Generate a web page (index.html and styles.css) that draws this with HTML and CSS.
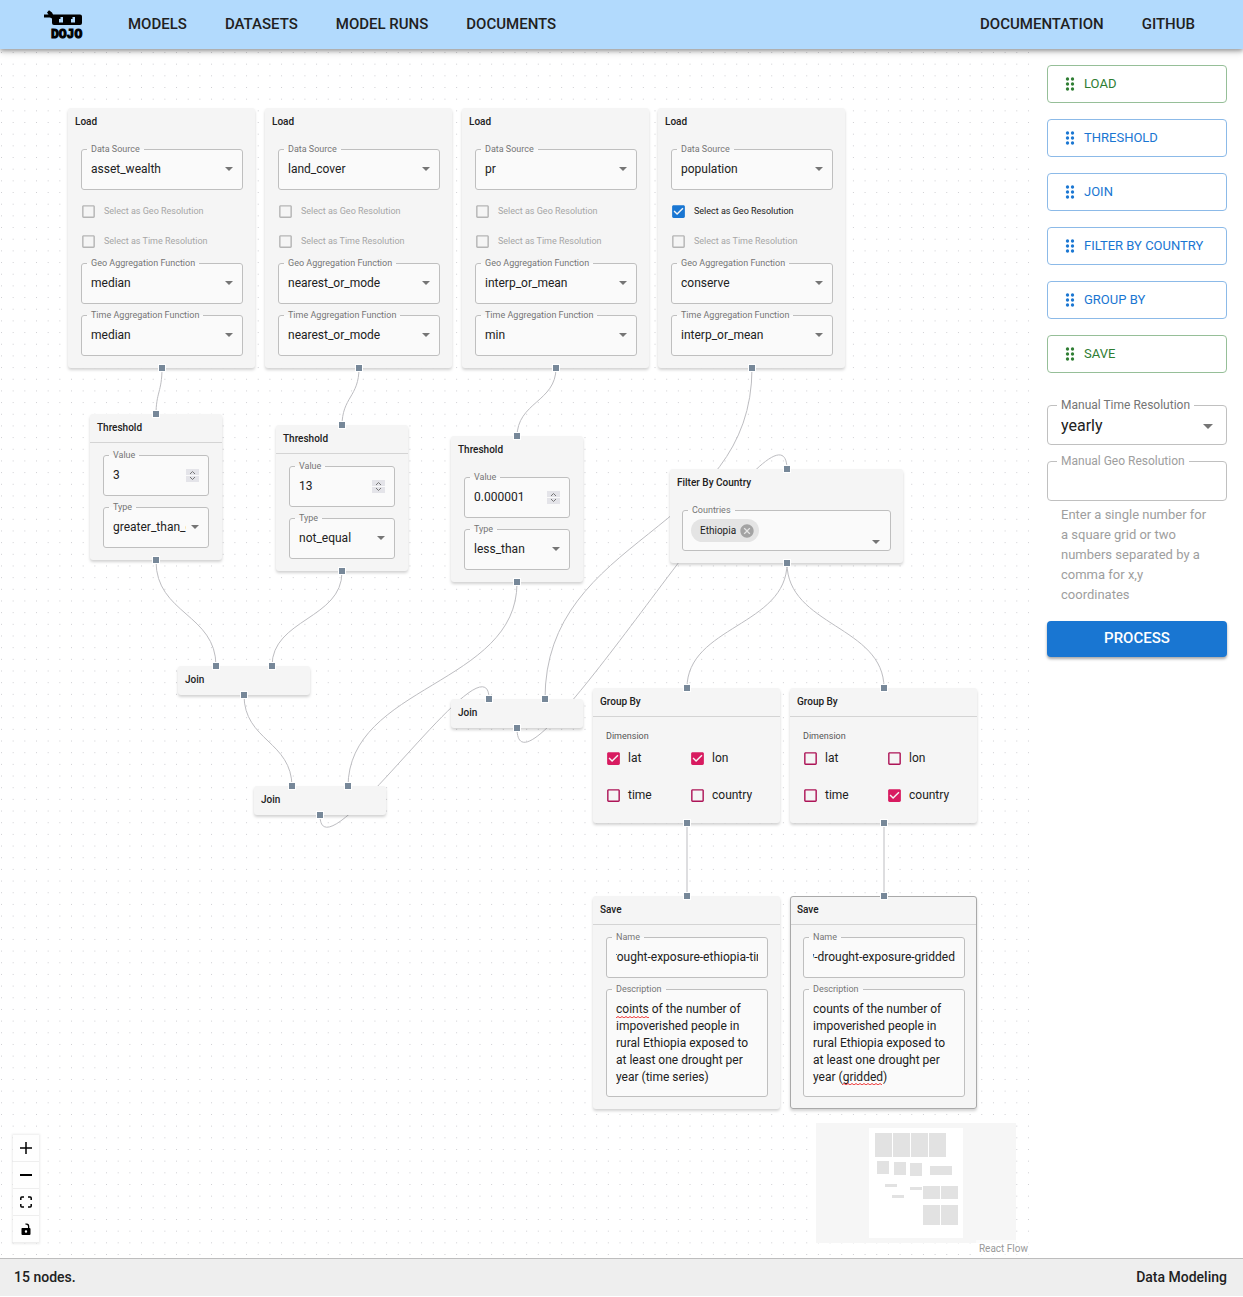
FILE: index.html
```html
<!DOCTYPE html>
<html lang="en">
<head>
<meta charset="utf-8">
<title>Dojo - Data Modeling</title>
<meta name="viewport" content="width=device-width, initial-scale=1">
<link rel="stylesheet" href="styles.css">
</head>
<body>
<header class="topbar">
  <a class="logo" href="#" aria-label="Dojo home">
    <svg width="40" height="32" viewBox="0 0 40 32">
      <path d="M0 5.500h4.500L3 3.500 5 1.200l3 2.300 1 2H36q2 0 2 2V14q0 2-2 2H10q-2 0-2-2v-4.500L6 8.500H0z"/>
      <path fill="#b2dafd" d="M15 8h4v5.500h-4zM27 8h4v5.500h-4z"/>
      <path d="M15 8h1.500v2H15zM27 8h1.500v2H27z"/>
      <text class="logo-text" x="7" y="29">DOJO</text>
    </svg>
  </a>
  <nav class="nav">
    <a href="#">MODELS</a>
    <a href="#">DATASETS</a>
    <a href="#">MODEL RUNS</a>
    <a href="#">DOCUMENTS</a>
  </nav>
  <nav class="nav nav-end">
    <a href="#">DOCUMENTATION</a>
    <a href="#">GITHUB</a>
  </nav>
</header>

<main class="workspace">
  <section class="canvas" aria-label="Data model graph">
    <svg class="layer" aria-hidden="true">
      <defs>
        <pattern id="dots" width="15" height="15" patternUnits="userSpaceOnUse" patternTransform="translate(1 3) scale(.778)">
          <circle cx=".6" cy=".6" r=".6" fill="#a0a0a8"/>
        </pattern>
      </defs>
      <rect width="100%" height="100%" fill="url(#dots)"/>
      <g class="edges">
        <path d="M162 319C162 343 156 343 156 366"/>
        <path d="M359 319C359 348 342 348 342 377"/>
        <path d="M556 319C556 353 517 353 517 388"/>
        <path d="M752 319C752 485 545 485 545 650"/>
        <path d="M156 512C156 565 216 565 216 617"/>
        <path d="M342 523C342 570 272 570 272 617"/>
        <path d="M517 534C517 636 348 636 348 738"/>
        <path d="M244 646C244 692 292 692 292 738"/>
        <path d="M320 766C320 836 489 580 489 650"/>
        <path d="M517 679C517 779 787 318 787 421"/>
        <path d="M787 514C787 577 687 577 687 639"/>
        <path d="M787 514C787 577 884 577 884 639"/>
        <path d="M687 773V847M884 773V847"/>
      </g>
    </svg>

    <article class="node wide load-1">
      <h2 class="node-title plain">Load</h2>
      <div class="node-body">
        <fieldset class="field"><legend><label for="src1">Data Source</label></legend><select id="src1"><option>asset_wealth</option></select></fieldset>
        <div class="checks">
          <label class="check off"><input type="checkbox" disabled>Select as Geo Resolution</label>
          <label class="check off"><input type="checkbox" disabled>Select as Time Resolution</label>
        </div>
        <fieldset class="field"><legend><label for="geo1">Geo Aggregation Function</label></legend><select id="geo1"><option>median</option></select></fieldset>
        <fieldset class="field"><legend><label for="time1">Time Aggregation Function</label></legend><select id="time1"><option>median</option></select></fieldset>
      </div>
      <i class="handle out"></i>
    </article>

    <article class="node wide load-2">
      <h2 class="node-title plain">Load</h2>
      <div class="node-body">
        <fieldset class="field"><legend><label for="src2">Data Source</label></legend><select id="src2"><option>land_cover</option></select></fieldset>
        <div class="checks">
          <label class="check off"><input type="checkbox" disabled>Select as Geo Resolution</label>
          <label class="check off"><input type="checkbox" disabled>Select as Time Resolution</label>
        </div>
        <fieldset class="field"><legend><label for="geo2">Geo Aggregation Function</label></legend><select id="geo2"><option>nearest_or_mode</option></select></fieldset>
        <fieldset class="field"><legend><label for="time2">Time Aggregation Function</label></legend><select id="time2"><option>nearest_or_mode</option></select></fieldset>
      </div>
      <i class="handle out"></i>
    </article>

    <article class="node wide load-3">
      <h2 class="node-title plain">Load</h2>
      <div class="node-body">
        <fieldset class="field"><legend><label for="src3">Data Source</label></legend><select id="src3"><option>pr</option></select></fieldset>
        <div class="checks">
          <label class="check off"><input type="checkbox" disabled>Select as Geo Resolution</label>
          <label class="check off"><input type="checkbox" disabled>Select as Time Resolution</label>
        </div>
        <fieldset class="field"><legend><label for="geo3">Geo Aggregation Function</label></legend><select id="geo3"><option>interp_or_mean</option></select></fieldset>
        <fieldset class="field"><legend><label for="time3">Time Aggregation Function</label></legend><select id="time3"><option>min</option></select></fieldset>
      </div>
      <i class="handle out"></i>
    </article>

    <article class="node wide load-4">
      <h2 class="node-title plain">Load</h2>
      <div class="node-body">
        <fieldset class="field"><legend><label for="src4">Data Source</label></legend><select id="src4"><option>population</option></select></fieldset>
        <div class="checks">
          <label class="check"><input type="checkbox" checked>Select as Geo Resolution</label>
          <label class="check off"><input type="checkbox" disabled>Select as Time Resolution</label>
        </div>
        <fieldset class="field"><legend><label for="geo4">Geo Aggregation Function</label></legend><select id="geo4"><option>conserve</option></select></fieldset>
        <fieldset class="field"><legend><label for="time4">Time Aggregation Function</label></legend><select id="time4"><option>interp_or_mean</option></select></fieldset>
      </div>
      <i class="handle out"></i>
    </article>

    <article class="node threshold-1">
      <i class="handle in"></i>
      <h2 class="node-title">Threshold</h2>
      <div class="node-body">
        <fieldset class="field"><legend><label for="val1">Value</label></legend><input id="val1" type="number" value="3"></fieldset>
        <fieldset class="field"><legend><label for="type1">Type</label></legend><select id="type1"><option>greater_than_equal</option></select></fieldset>
      </div>
      <i class="handle out"></i>
    </article>

    <article class="node threshold-2">
      <i class="handle in"></i>
      <h2 class="node-title">Threshold</h2>
      <div class="node-body">
        <fieldset class="field"><legend><label for="val2">Value</label></legend><input id="val2" type="number" value="13"></fieldset>
        <fieldset class="field"><legend><label for="type2">Type</label></legend><select id="type2"><option>not_equal</option></select></fieldset>
      </div>
      <i class="handle out"></i>
    </article>

    <article class="node threshold-3">
      <i class="handle in"></i>
      <h2 class="node-title plain">Threshold</h2>
      <div class="node-body">
        <fieldset class="field"><legend><label for="val3">Value</label></legend><input id="val3" type="number" step="any" value="0.000001"></fieldset>
        <fieldset class="field"><legend><label for="type3">Type</label></legend><select id="type3"><option>less_than</option></select></fieldset>
      </div>
      <i class="handle out"></i>
    </article>

    <article class="node filter">
      <i class="handle in"></i>
      <h2 class="node-title plain">Filter By Country</h2>
      <div class="node-body">
        <fieldset class="field combo">
          <legend><label for="countries">Countries</label></legend>
          <div class="combo-row">
            <span class="chip">Ethiopia
              <button type="button" aria-label="Remove Ethiopia">
                <svg width="16" height="16" viewBox="0 0 24 24"><path fill="#a3a3a3" d="M12 2C6.470 2 2 6.470 2 12s4.470 10 10 10 10-4.470 10-10S17.530 2 12 2zm5 13.590L15.590 17 12 13.410 8.410 17 7 15.590 10.590 12 7 8.410 8.410 7 12 10.590 15.590 7 17 8.410 13.410 12 17 15.590z"/></svg>
              </button>
            </span>
            <input id="countries" type="text">
            <svg class="combo-arrow" width="8" height="4" viewBox="0 0 8 4"><path fill="#757575" d="M0 0h8L4 4z"/></svg>
          </div>
        </fieldset>
      </div>
      <i class="handle out"></i>
    </article>

    <article class="node join-1">
      <i class="handle in left"></i><i class="handle in right"></i>
      <h2 class="node-title plain">Join</h2>
      <i class="handle out"></i>
    </article>
    <article class="node join-2">
      <i class="handle in left"></i><i class="handle in right"></i>
      <h2 class="node-title plain">Join</h2>
      <i class="handle out"></i>
    </article>
    <article class="node join-3">
      <i class="handle in left"></i><i class="handle in right"></i>
      <h2 class="node-title plain">Join</h2>
      <i class="handle out"></i>
    </article>

    <article class="node wide group-1">
      <i class="handle in"></i>
      <h2 class="node-title">Group By</h2>
      <div class="node-body grouping">
        <p class="group-label">Dimension</p>
        <div class="dimensions">
          <label class="check pink"><input type="checkbox" checked>lat</label>
          <label class="check pink"><input type="checkbox" checked>lon</label>
          <label class="check pink"><input type="checkbox">time</label>
          <label class="check pink"><input type="checkbox">country</label>
        </div>
      </div>
      <i class="handle out"></i>
    </article>

    <article class="node wide group-2">
      <i class="handle in"></i>
      <h2 class="node-title">Group By</h2>
      <div class="node-body grouping">
        <p class="group-label">Dimension</p>
        <div class="dimensions">
          <label class="check pink"><input type="checkbox">lat</label>
          <label class="check pink"><input type="checkbox">lon</label>
          <label class="check pink"><input type="checkbox">time</label>
          <label class="check pink"><input type="checkbox" checked>country</label>
        </div>
      </div>
      <i class="handle out"></i>
    </article>

    <article class="node wide save-1">
      <i class="handle in"></i>
      <h2 class="node-title">Save</h2>
      <div class="node-body">
        <fieldset class="field"><legend><label for="name1">Name</label></legend><input id="name1" type="text" value="drought-exposure-ethiopia-time-series" data-scroll="10"></fieldset>
        <fieldset class="field area"><legend><label for="desc1">Description</label></legend><textarea id="desc1" rows="5" spellcheck="false">coints of the number of impoverished people in rural Ethiopia exposed to at least one drought per year (time series)</textarea><span class="squiggle first"></span></fieldset>
      </div>
    </article>

    <article class="node wide selected save-2">
      <i class="handle in"></i>
      <h2 class="node-title">Save</h2>
      <div class="node-body">
        <fieldset class="field"><legend><label for="name2">Name</label></legend><input id="name2" type="text" value="country-drought-exposure-gridded" data-scroll="999"></fieldset>
        <fieldset class="field area"><legend><label for="desc2">Description</label></legend><textarea id="desc2" rows="5" spellcheck="false">counts of the number of impoverished people in rural Ethiopia exposed to at least one drought per year (gridded)</textarea><span class="squiggle last"></span></fieldset>
      </div>
    </article>

    <div class="controls">
      <button type="button" aria-label="Zoom in"><svg width="12" height="12" viewBox="0 0 24 24"><path d="M10.500 0h3v10.500H24v3H13.500V24h-3V13.500H0v-3h10.500z"/></svg></button>
      <button type="button" aria-label="Zoom out"><svg width="12" height="12" viewBox="0 0 12 12"><path d="M0 5h12v2H0z"/></svg></button>
      <button type="button" aria-label="Fit view"><svg width="12" height="12" viewBox="0 0 12 12"><path fill="none" stroke="#000" stroke-width="1.500" d="M.8 4V2Q.8 1 1.800 1H4M8 1h2.200q1 0 1 1v2M11.200 8v2q0 1-1 1H8M4 11H1.800q-1 0-1-1V8"/></svg></button>
      <button type="button" aria-label="Toggle interactivity"><svg width="12" height="12" viewBox="0 0 12 12"><path fill-rule="evenodd" d="M2 5h6V3.500Q8 1.500 5.500 1.500L5 .8Q9.300-.3 9.300 3.500V5h.2q1 0 1 1v5q0 1-1 1H2.500q-1 0-1-1V6q0-1 .5-1zm4 2.300a1.200 1.200 0 100 2.400 1.200 1.200 0 000-2.400z"/></svg></button>
    </div>

    <svg class="minimap" width="200" height="120" viewBox="0 0 200 120" aria-label="Mini map">
      <path fill="#f6f6f6" d="M0 0h200v120H0z"/>
      <path fill="#fff" d="M53 5h94v110H53z"/>
      <path fill="#e2e2e2" d="M59 10h17v24H59zM77 10h17v24H77zM95 10h17v24H95zM113 10h17v24h-17zM61 38h12v13H61zM78 39h12v13H78zM94 40h12v13H94zM114 43h22v9h-22zM69 61h12v3H69zM94 64h12v3H94zM76 72h12v3H76zM107 63h17v13h-17zM125 63h17v13h-17zM107 82h17v20h-17zM125 82h17v20h-17z"/>
    </svg>
    <a class="attribution" href="#">React Flow</a>
  </section>

  <aside class="sidebar">
    <button type="button" class="tool green"><svg width="20" height="20" viewBox="0 0 24 24"><use href="#grip"/></svg>LOAD</button>
    <button type="button" class="tool"><svg width="20" height="20" viewBox="0 0 24 24"><use href="#grip"/></svg>THRESHOLD</button>
    <button type="button" class="tool"><svg width="20" height="20" viewBox="0 0 24 24"><use href="#grip"/></svg>JOIN</button>
    <button type="button" class="tool"><svg width="20" height="20" viewBox="0 0 24 24"><use href="#grip"/></svg>FILTER BY COUNTRY</button>
    <button type="button" class="tool"><svg width="20" height="20" viewBox="0 0 24 24"><use href="#grip"/></svg>GROUP BY</button>
    <button type="button" class="tool green"><svg width="20" height="20" viewBox="0 0 24 24"><g id="grip" fill="currentColor"><circle cx="9" cy="6" r="2"/><circle cx="15" cy="6" r="2"/><circle cx="9" cy="12" r="2"/><circle cx="15" cy="12" r="2"/><circle cx="9" cy="18" r="2"/><circle cx="15" cy="18" r="2"/></g></svg>SAVE</button>

    <div class="settings">
      <fieldset class="field large"><legend><label for="mtime">Manual Time Resolution</label></legend><select id="mtime"><option>yearly</option></select></fieldset>
      <fieldset class="field large muted"><legend><label for="mgeo">Manual Geo Resolution</label></legend><input id="mgeo" type="text" aria-describedby="mgeo-help" disabled></fieldset>
      <p class="help" id="mgeo-help">Enter a single number for a square grid or two numbers separated by a comma for x,y coordinates</p>
    </div>
    <button type="button" class="process">PROCESS</button>
  </aside>
</main>

<footer class="statusbar"><span>15 nodes.</span><span>Data Modeling</span></footer>
<script src="script.js"></script>
</body>
</html>
```
FILE: styles.css
```css
* { box-sizing: border-box; }

body {
  margin: 0;
  min-height: 100vh;
  display: flex;
  flex-direction: column;
  background: #fff;
  color: #212121;
  font: 14px/20px Roboto, "Liberation Sans", sans-serif;
}

button, input, select, textarea { font: inherit; color: inherit; }
h2, p { margin: 0; }

/* Header */
.topbar {
  position: relative;
  z-index: 2;
  display: flex;
  align-items: center;
  height: 49px;
  padding: 0 48px 0 44px;
  background: #b2dafd;
  box-shadow: 0 2px 4px rgba(0, 0, 0, .3), 0 3px 8px rgba(0, 0, 0, .15);
}
.logo { display: flex; margin-right: 44px; }
.logo-text {
  font-family: "Liberation Mono", monospace;
  font-size: 13px;
  font-weight: 700;
  stroke: #000;
  stroke-width: 1px;
}
.nav { display: flex; gap: 38px; padding-bottom: 2px; }
.nav-end { margin-left: auto; }
.nav a {
  color: #212121;
  font-size: 15px;
  font-weight: 500;
  text-decoration: none;
}

.workspace {
  flex: 1;
  display: grid;
  grid-template-columns: minmax(0, 1fr) 212px;
}

/* Graph canvas */
.canvas {
  position: relative;
  min-height: 1120px;
  overflow: hidden;
}
.layer { position: absolute; inset: 0; width: 100%; height: 100%; }
.edges path { fill: none; stroke: #bdbdc1; }

.node {
  position: absolute;
  width: 132px;
  background: #f5f5f5;
  border-radius: 3px;
  box-shadow: 0 2px 3px rgba(0, 0, 0, .18);
  font-size: 12px;
}
.node.wide { width: 187px; }
.selected { outline: 1px solid #a9a9a9; outline-offset: -1px; }
.node-title {
  height: 29px;
  padding: 0 7px;
  border-bottom: 1px solid #d4d4d4;
  font-size: 10px;
  font-weight: 500;
  line-height: 28px;
}
.plain { border-color: transparent; }
.node-body {
  display: flex;
  flex-direction: column;
  gap: 6px;
  padding: 7px 13px 12px;
}
.wide .node-body { padding-right: 12px; }

.load-1 { left: 68px; top: 59px; }
.load-2 { left: 265px; top: 59px; }
.load-3 { left: 462px; top: 59px; }
.load-4 { left: 658px; top: 59px; }
.threshold-1 { left: 90px; top: 365px; }
.threshold-2 { left: 276px; top: 376px; }
.threshold-3 { left: 451px; top: 387px; }
.filter { left: 670px; top: 420px; }
.node.filter { width: 233px; }
.filter .node-body { padding: 7px 12px 12px; }
.join-1 { left: 178px; top: 617px; }
.join-2 { left: 451px; top: 650px; }
.join-3 { left: 254px; top: 737px; }
.group-1 { left: 593px; top: 639px; }
.group-2 { left: 790px; top: 639px; }
.save-1 { left: 593px; top: 847px; }
.save-2 { left: 790px; top: 847px; }

.handle {
  position: absolute;
  left: 50%;
  width: 8px;
  height: 8px;
  margin: -4px;
  border: 1px solid #fff;
  background: #778899;
}
.in { top: 0; }
.out { bottom: 0; }
.left { left: 29%; }
.right { left: 71%; }

/* Outlined fields */
.field {
  position: relative;
  min-width: 0;
  margin: 0;
  padding: 0 0 6px;
  border: 1px solid #bfbfbf;
  border-radius: 3px;
  background: #fafafa;
}
.field legend {
  margin-left: 5px;
  padding: 0 4px;
  color: #757575;
  font-size: 9px;
  line-height: 11px;
}
.field legend label { display: block; }
.field select, .field input, .field textarea {
  display: block;
  width: 100%;
  height: 28px;
  padding: 0 9px;
  border: 0;
  outline: 0;
  background: transparent;
}
.field select {
  appearance: none;
  padding-right: 22px;
  background: url("data:image/svg+xml,%3Csvg xmlns='http://www.w3.org/2000/svg' width='8' height='4'%3E%3Cpath fill='%23757575' d='M0 0h8L4 4z'/%3E%3C/svg%3E") no-repeat right 9px center;
}
.field input[type="number"] {
  appearance: textfield;
  background: url("data:image/svg+xml,%3Csvg xmlns='http://www.w3.org/2000/svg' width='13' height='13'%3E%3Cpath fill='%23e4e4e9' d='M0 0h13v6H0zM0 7h13v6H0z'/%3E%3Cpath fill='none' stroke='%23777' d='M4 5l2.500-2.500L9 5M4 8l2.500 2.500L9 8'/%3E%3C/svg%3E") no-repeat right 9px center;
}
.field input[type="number"]::-webkit-inner-spin-button { appearance: none; }
.field input[data-scroll] { width: auto; margin: 0 9px; padding: 0; min-width: 0; max-width: 142px; }
.field textarea {
  height: 97px;
  padding: 6px 9px 0;
  line-height: 17px;
  resize: none;
  overflow: hidden;
}
.area { padding-bottom: 4px; }
.squiggle {
  position: absolute;
  height: 2px;
  background: url("data:image/svg+xml,%3Csvg xmlns='http://www.w3.org/2000/svg' width='4' height='2'%3E%3Cpath fill='none' stroke='%23e33' d='M0 2L2 .5 4 2'/%3E%3C/svg%3E") repeat-x;
}
.squiggle.first { left: 9px; top: 21px; width: 33px; }
.squiggle.last { left: 38px; top: 88px; width: 40px; }

.combo { padding-bottom: 5px; }
.combo-row { display: flex; gap: 4px; height: 29px; padding: 3px 10px 0 8px; }
.combo-row input { flex: 1; min-width: 0; height: 23px; }
.combo-arrow { align-self: flex-end; margin-bottom: 1px; }
.chip {
  display: flex;
  align-items: center;
  gap: 3px;
  height: 23px;
  padding: 0 4px 0 9px;
  border-radius: 12px;
  background: #e4e4e4;
  font-size: 10px;
}
.chip button { display: flex; padding: 0; border: 0; background: none; }

/* Check boxes */
.checks { display: flex; flex-direction: column; gap: 8px; padding-top: 4px; }
.check { display: flex; align-items: center; gap: 7px; height: 22px; font-size: 9px; }
.check input {
  appearance: none;
  width: 17px;
  height: 17px;
  margin: 0 0 0 -1px;
  background: url("data:image/svg+xml,%3Csvg xmlns='http://www.w3.org/2000/svg' viewBox='0 0 24 24'%3E%3Cpath fill='%23b5b5b5' d='M19 5v14H5V5h14m0-2H5c-1.100 0-2 .9-2 2v14c0 1.100.9 2 2 2h14c1.100 0 2-.9 2-2V5c0-1.100-.9-2-2-2z'/%3E%3C/svg%3E") center / 17px no-repeat;
}
.check input:checked {
  background-image: url("data:image/svg+xml,%3Csvg xmlns='http://www.w3.org/2000/svg' viewBox='0 0 24 24'%3E%3Cpath fill='%231976d2' d='M19 3H5c-1.110 0-2 .9-2 2v14c0 1.100.89 2 2 2h14c1.110 0 2-.9 2-2V5c0-1.100-.89-2-2-2zm-9 14l-5-5 1.410-1.410L10 14.170l7.590-7.590L19 8l-9 9z'/%3E%3C/svg%3E");
}
.off { color: #a6a6a6; }
.pink { gap: 6px; font-size: 12px; }
.pink input {
  background-image: url("data:image/svg+xml,%3Csvg xmlns='http://www.w3.org/2000/svg' viewBox='0 0 24 24'%3E%3Cpath fill='%23ad1457' d='M19 5v14H5V5h14m0-2H5c-1.100 0-2 .9-2 2v14c0 1.100.9 2 2 2h14c1.100 0 2-.9 2-2V5c0-1.100-.9-2-2-2z'/%3E%3C/svg%3E");
}
.pink input:checked {
  background-image: url("data:image/svg+xml,%3Csvg xmlns='http://www.w3.org/2000/svg' viewBox='0 0 24 24'%3E%3Cpath fill='%23d81b60' d='M19 3H5c-1.110 0-2 .9-2 2v14c0 1.100.89 2 2 2h14c1.110 0 2-.9 2-2V5c0-1.100-.89-2-2-2zm-9 14l-5-5 1.410-1.410L10 14.170l7.590-7.590L19 8l-9 9z'/%3E%3C/svg%3E");
}
.grouping { gap: 5px; }
.group-label { padding-top: 6px; color: #555; font-size: 9px; line-height: 12px; }
.dimensions {
  display: grid;
  grid-template-columns: 84px 1fr;
  row-gap: 15px;
  padding-bottom: 5px;
}

/* Canvas overlays */
.controls {
  position: absolute;
  left: 13px;
  bottom: 15px;
  box-shadow: 0 0 2px 1px rgba(0, 0, 0, .08);
}
.controls button {
  display: flex;
  align-items: center;
  justify-content: center;
  width: 26px;
  height: 27px;
  padding: 0;
  border: 0;
  border-bottom: 1px solid #eee;
  background: #fefefe;
}
.minimap { position: absolute; right: 15px; bottom: 15px; }
.attribution {
  position: absolute;
  right: 0;
  bottom: 0;
  padding: 0 3px;
  background: rgba(255, 255, 255, .5);
  color: #999;
  font-size: 10px;
  line-height: 18px;
  text-decoration: none;
}

/* Sidebar */
.sidebar {
  display: flex;
  flex-direction: column;
  gap: 16px;
  padding: 16px;
}
.tool {
  display: flex;
  align-items: center;
  gap: 4px;
  height: 38px;
  padding: 0 12px;
  border: 1px solid #8cbae8;
  border-radius: 4px;
  background: #fff;
  color: #1976d2;
  font-size: 13px;
}
.tool.green { border-color: #96bf98; color: #2e7d32; }
.settings { display: flex; flex-direction: column; padding-top: 9px; }
.field.large {
  margin-bottom: 9px;
  padding-bottom: 5px;
  border-color: #c0c0c0;
  border-radius: 4px;
  background: none;
}
.field.large legend { margin-left: 9px; font-size: 12px; line-height: 15px; }
.field.large select, .field.large input { height: 26px; padding-left: 13px; font-size: 16px; }
.field.large select {
  background-image: url("data:image/svg+xml,%3Csvg xmlns='http://www.w3.org/2000/svg' width='10' height='5'%3E%3Cpath fill='%23757575' d='M0 0h10L5 5z'/%3E%3C/svg%3E");
  background-position: right 13px center;
}
.field.muted { margin-bottom: 4px; }
.field.muted legend { color: #9e9e9e; }
.help { padding: 0 14px; color: #9e9e9e; font-size: 13px; }
.process {
  height: 36px;
  padding: 0 0 2px;
  border: 0;
  border-radius: 4px;
  background: #1976d2;
  box-shadow: 0 2px 3px rgba(0, 0, 0, .35);
  color: #fff;
  font-size: 15px;
  font-weight: 500;
}

/* Footer */
.statusbar {
  display: flex;
  justify-content: space-between;
  align-items: center;
  height: 38px;
  margin-bottom: 1px;
  padding: 0 16px 2px 14px;
  border-top: 1px solid #bdbdbd;
  background: #eee;
  font-size: 14px;
  font-weight: 500;
}
```
FILE: script.js
```js
document.querySelectorAll("input[data-scroll]").forEach(function (input) {
  input.scrollLeft = Number(input.dataset.scroll);
});
```
